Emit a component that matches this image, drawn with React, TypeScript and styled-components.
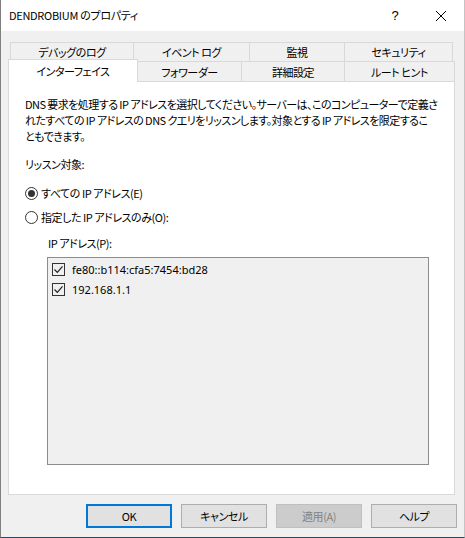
import React from "react";
import styled, { createGlobalStyle } from "styled-components";

const Global = createGlobalStyle`
  html, body { margin: 0; padding: 0; background: #f0f0f0; }
  body {
    font-family: "Noto Sans CJK JP", "Noto Sans", sans-serif;
    font-size: 11px;
    letter-spacing: -0.45px;
    color: #000;
    font-feature-settings: "palt";
  }
  * { box-sizing: border-box; }
`;

const Window = styled.div`
  width: 465px;
  height: 538px;
  display: flex;
  flex-direction: column;
  background: #f0f0f0;
  border-left: 1px solid #7f7f7f;
  border-right: 1px solid #c4c4c4;
  border-bottom: 1px solid #1f4e66;
  overflow: hidden;
`;

const TitleBar = styled.div`
  height: 31px;
  flex: none;
  background: #fff;
  display: flex;
  align-items: center;
`;

const Title = styled.div`
  flex: 1;
  padding-left: 8px;
  font-size: 11px;
  letter-spacing: -0.3px;
  line-height: 16px;
  margin-top: -1px;
`;

const CaptionButton = styled.div`
  width: 46px;
  height: 31px;
  display: flex;
  align-items: center;
  justify-content: center;
  font-family: "Liberation Sans", sans-serif;
  font-size: 13px;
  letter-spacing: 0;
`;

const Body = styled.div`
  flex: 1;
  display: flex;
  flex-direction: column;
  padding: 11px 0 0 7px;
`;

const TabRow = styled.div<{ $indent?: number }>`
  display: flex;
  padding-left: ${(p) => p.$indent ?? 0}px;
`;

const Tab = styled.div<{ $w: number; $h: number }>`
  width: ${(p) => p.$w}px;
  height: ${(p) => p.$h}px;
  margin-right: -1px;
  border: 1px solid #d9d9d9;
  border-bottom: none;
  background: #f0f0f0;
  display: flex;
  align-items: center;
  justify-content: center;
  line-height: 16px;
  white-space: nowrap;
`;

const ActiveTab = styled(Tab)`
  background: #fff;
  margin-top: -2px;
  margin-bottom: -1px;
  position: relative;
  z-index: 1;
  align-items: flex-start;
  padding-top: 3px;
`;

const Panel = styled.div`
  width: 447px;
  height: 414px;
  background: #fff;
  border: 1px solid #d9d9d9;
  padding: 14px 4px 0 16px;
  display: flex;
  flex-direction: column;
`;

const Description = styled.p`
  margin: 0;
  line-height: 16px;
  white-space: nowrap;
  letter-spacing: -0.55px;
`;

const Label = styled.div<{ $indent?: number; $top: number }>`
  margin-top: ${(p) => p.$top}px;
  margin-left: ${(p) => p.$indent ?? 0}px;
  line-height: 16px;
`;

const RadioRow = styled.div<{ $top: number }>`
  display: flex;
  align-items: center;
  gap: 3px;
  margin-top: ${(p) => p.$top}px;
  height: 16px;
`;

const RadioCircle = styled.span<{ $checked?: boolean }>`
  width: 13px;
  height: 13px;
  border: 1px solid #333;
  border-radius: 50%;
  background: #fff;
  display: flex;
  align-items: center;
  justify-content: center;
  &::after {
    content: "";
    width: 7px;
    height: 7px;
    border-radius: 50%;
    background: ${(p) => (p.$checked ? "#333" : "transparent")};
  }
`;

const ListBox = styled.div`
  margin-top: 6px;
  margin-left: 22px;
  width: 382px;
  height: 208px;
  border: 1px solid #8c8c8c;
  background: #f0f0f0;
  padding: 1px 0 0 4px;
  display: flex;
  flex-direction: column;
`;

const ListItem = styled.div`
  height: 20px;
  display: flex;
  align-items: center;
  gap: 7px;
  font-family: "Noto Sans", "Noto Sans CJK JP", sans-serif;
  font-size: 11px;
  letter-spacing: 0;
`;

const CheckBox = styled.span`
  width: 13px;
  height: 13px;
  border: 1px solid #333;
  display: flex;
  align-items: center;
  justify-content: center;
`;

const ButtonBar = styled.div`
  display: flex;
  justify-content: flex-end;
  gap: 9px;
  padding-right: 7px;
  margin-top: 9px;
`;

const Button = styled.div<{ $default?: boolean; $disabled?: boolean }>`
  width: 86px;
  height: 24px;
  display: flex;
  align-items: center;
  justify-content: center;
  background: ${(p) => (p.$disabled ? "#cccccc" : "#e1e1e1")};
  border: ${(p) =>
    p.$default ? "2px solid #0078d7" : p.$disabled ? "1px solid #bfbfbf" : "1px solid #adadad"};
  color: ${(p) => (p.$disabled ? "#838383" : "#000")};
  line-height: 16px;
`;

const Check = () => (
  <svg width="11" height="11" viewBox="0 0 11 11">
    <path d="M1.5 5.5 L4.3 8.3 L9.5 2.3" fill="none" stroke="#222" strokeWidth="1.2" />
  </svg>
);

const CloseIcon = () => (
  <svg width="12" height="12" viewBox="0 0 12 12">
    <path d="M1 1 L11 11 M11 1 L1 11" stroke="#000" strokeWidth="1" />
  </svg>
);

const row1 = [
  { label: "デバッグのログ", w: 124 },
  { label: "イベント ログ", w: 117 },
  { label: "監視", w: 96 },
  { label: "セキュリティ", w: 109 },
];

const row2 = [
  { label: "フォワーダー", w: 105 },
  { label: "詳細設定", w: 104 },
  { label: "ルート ヒント", w: 111 },
];

export default function App() {
  return (
    <>
      <Global />
      <Window>
        <TitleBar>
          <Title>DENDROBIUM のプロパティ</Title>
          <CaptionButton>?</CaptionButton>
          <CaptionButton>
            <CloseIcon />
          </CaptionButton>
        </TitleBar>
        <Body>
          <TabRow $indent={2}>
            {row1.map((t) => (
              <Tab key={t.label} $w={t.w} $h={19}>
                {t.label}
              </Tab>
            ))}
          </TabRow>
          <TabRow>
            <ActiveTab $w={130} $h={23}>
              インターフェイス
            </ActiveTab>
            {row2.map((t) => (
              <Tab key={t.label} $w={t.w} $h={20}>
                {t.label}
              </Tab>
            ))}
          </TabRow>
          <Panel>
            <Description>
              DNS 要求を処理する IP アドレスを選択してください。サーバーは、このコンピューターで定義さ
              <br />
              れたすべての IP アドレスの DNS クエリをリッスンします。対象とする IP アドレスを限定するこ
              <br />
              ともできます。
            </Description>
            <Label $top={12}>リッスン対象:</Label>
            <RadioRow $top={13}>
              <RadioCircle $checked />
              <span>すべての IP アドレス(E)</span>
            </RadioRow>
            <RadioRow $top={8}>
              <RadioCircle />
              <span>指定した IP アドレスのみ(O):</span>
            </RadioRow>
            <Label $top={10} $indent={23}>
              IP アドレス(P):
            </Label>
            <ListBox>
              <ListItem>
                <CheckBox>
                  <Check />
                </CheckBox>
                <span>fe80::b114:cfa5:7454:bd28</span>
              </ListItem>
              <ListItem>
                <CheckBox>
                  <Check />
                </CheckBox>
                <span>192.168.1.1</span>
              </ListItem>
            </ListBox>
          </Panel>
          <ButtonBar>
            <Button $default>OK</Button>
            <Button>キャンセル</Button>
            <Button $disabled>適用(A)</Button>
            <Button>ヘルプ</Button>
          </ButtonBar>
        </Body>
      </Window>
    </>
  );
}
